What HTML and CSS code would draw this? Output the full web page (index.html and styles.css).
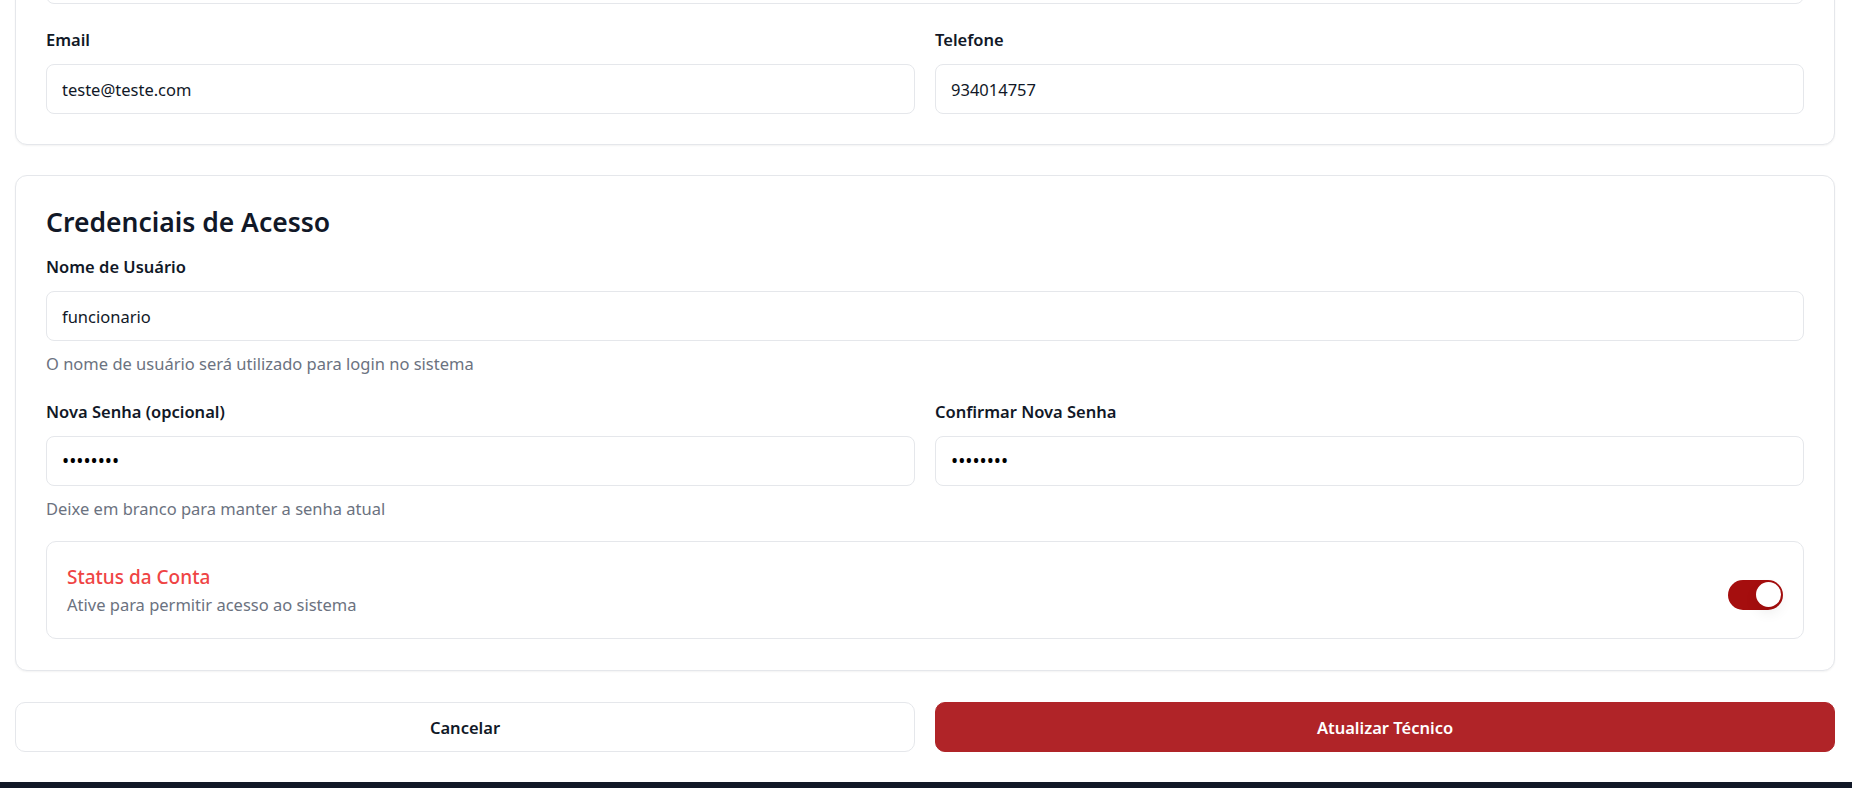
FILE: index.html
```html
<!DOCTYPE html>
<html lang="pt">
<head>
<meta charset="utf-8">
<title>Editar Técnico</title>
<link rel="stylesheet" href="styles.css">
</head>
<body>
<main class="page">
  <section class="card card-top">
    <div class="field">
      <input class="input" type="text" value="" aria-label="Nome completo">
    </div>
    <div class="grid2 row">
      <div class="field">
        <label class="label">Email</label>
        <input class="input" type="email" value="teste@teste.com">
      </div>
      <div class="field">
        <label class="label">Telefone</label>
        <input class="input" type="text" value="934014757">
      </div>
    </div>
  </section>

  <section class="card card-cred">
    <h2 class="card-title">Credenciais de Acesso</h2>
    <div class="field">
      <label class="label">Nome de Usuário</label>
      <input class="input" type="text" value="funcionario">
      <p class="hint">O nome de usuário será utilizado para login no sistema</p>
    </div>
    <div class="grid2 row">
      <div class="field">
        <label class="label">Nova Senha (opcional)</label>
        <input class="input input-pass" type="password" value="12345678">
      </div>
      <div class="field">
        <label class="label">Confirmar Nova Senha</label>
        <input class="input input-pass" type="password" value="12345678">
      </div>
    </div>
    <p class="hint">Deixe em branco para manter a senha atual</p>
    <div class="status">
      <div class="status-text">
        <div class="status-title">Status da Conta</div>
        <div class="status-desc">Ative para permitir acesso ao sistema</div>
      </div>
      <span class="toggle" role="switch" aria-checked="true"><span class="knob"></span></span>
    </div>
  </section>

  <div class="actions">
    <button class="btn btn-outline" type="button">Cancelar</button>
    <button class="btn btn-primary" type="submit">Atualizar Técnico</button>
  </div>
</main>
<footer class="footer"></footer>
</body>
</html>
```
FILE: styles.css
```css
* { box-sizing: border-box; }
html, body { margin: 0; padding: 0; background: #ffffff; }
body {
  font-family: "Noto Sans", "Open Sans", Arial, sans-serif;
  color: #111827;
}
.page {
  margin-top: -77px;
  padding: 0 17px 0 15px;
}
.card {
  background: #fff;
  border: 1px solid #e5e7eb;
  border-radius: 12px;
  box-shadow: 0 1px 2px rgba(0,0,0,0.05);
  padding: 30px;
}
.card-cred { margin-top: 30px; padding-bottom: 31px; }
.grid2 {
  display: grid;
  grid-template-columns: 1fr 1fr;
  column-gap: 20px;
}
.row { margin-top: 23px; }
.field { display: flex; flex-direction: column; }
.label {
  display: block;
  font-size: 16.5px;
  font-weight: 600;
  line-height: 25px;
  margin-bottom: 12px;
  color: #111827;
}
.input {
  height: 50px;
  width: 100%;
  border: 1px solid #e5e7eb;
  border-radius: 8px;
  padding: 0 15px;
  font-family: inherit;
  font-size: 16.5px;
  color: #111827;
  background: #fff;
  outline: none;
}
.input-pass {
  font-size: 19px;
  color: #000;
}
.hint {
  margin: 10px 0 0;
  font-size: 16.5px;
  line-height: 25px;
  color: #6b7280;
}
.card-title {
  margin: 0 0 16px;
  font-size: 26.5px;
  line-height: 32px;
  font-weight: 600;
  color: #111827;
}
.status {
  margin-top: 20px;
  border: 1px solid #e5e7eb;
  border-radius: 10px;
  padding: 20px 20px 21px;
  display: flex;
  align-items: center;
  justify-content: space-between;
}
.status-title {
  font-size: 19px;
  line-height: 30px;
  font-weight: 500;
  color: #ef4444;
}
.status-desc {
  font-size: 16.5px;
  line-height: 25px;
  color: #6b7280;
}
.toggle {
  margin-top: 10px;
  width: 55px;
  height: 30px;
  border-radius: 15px;
  background: #a50e0e;
  display: flex;
  align-items: center;
  justify-content: flex-end;
  padding: 0 2.5px;
}
.knob {
  width: 25px;
  height: 25px;
  border-radius: 50%;
  background: #fff;
  box-shadow: 0 6px 14px rgba(0,0,0,0.07);
}
.actions {
  margin-top: 31px;
  display: grid;
  grid-template-columns: 1fr 1fr;
  column-gap: 20px;
}
.btn {
  height: 50px;
  border-radius: 10px;
  font-family: inherit;
  font-size: 16.5px;
  font-weight: 600;
  cursor: pointer;
}
.btn-outline {
  background: #fff;
  border: 1px solid #e5e7eb;
  color: #111827;
}
.btn-primary {
  background: #b02428;
  border: 1px solid #b02428;
  color: #fff;
}
.footer {
  margin-top: 30px;
  height: 6px;
  background: #111827;
}
```
